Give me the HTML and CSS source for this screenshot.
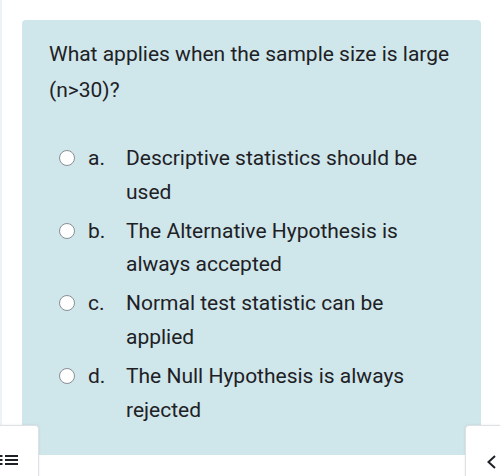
FILE: index.html
```html
<!DOCTYPE html>
<html>
<head>
<meta charset="utf-8">
<link rel="stylesheet" href="styles.css">
</head>
<body>
<div class="page">
  <div class="card">
    <div class="question">What applies when the sample size is large (n&gt;30)?</div>
    <div class="answers">
      <label class="option"><span class="radio"></span><span class="letter">a.</span><span class="text">Descriptive statistics should be used</span></label>
      <label class="option"><span class="radio"></span><span class="letter">b.</span><span class="text">The Alternative Hypothesis is always accepted</span></label>
      <label class="option"><span class="radio"></span><span class="letter">c.</span><span class="text">Normal test statistic can be applied</span></label>
      <label class="option"><span class="radio"></span><span class="letter">d.</span><span class="text">The Null Hypothesis is always rejected</span></label>
    </div>
  </div>
</div>
<div class="drawer-btn left">
  <svg width="19" height="10" viewBox="0 0 19 10"><rect x="0" y="0" width="2.5" height="2" fill="#1d2125"/><rect x="5" y="0" width="13" height="2" fill="#1d2125"/><rect x="0" y="4" width="2.5" height="2" fill="#1d2125"/><rect x="5" y="4" width="13" height="2" fill="#1d2125"/><rect x="0" y="8" width="2.5" height="2" fill="#1d2125"/><rect x="5" y="8" width="13" height="2" fill="#1d2125"/></svg>
</div>
<div class="drawer-btn right">
  <svg width="12" height="14" viewBox="0 0 12 14"><path d="M9 1 L2.5 7 L9 13" fill="none" stroke="#1d2125" stroke-width="2"/></svg>
</div>
</body>
</html>
```
FILE: styles.css
```css
html, body {
  margin: 0;
  padding: 0;
  background: #fff;
  font-family: Roboto, "Liberation Sans", sans-serif;
  color: #1d2125;
}
.page {
  min-height: 476px;
  border-left: 2px solid #eef1f5;
  padding: 20px 0 0 20px;
  box-sizing: border-box;
}
.card {
  width: 459px;
  height: 435px;
  box-sizing: border-box;
  background: #cfe6ea;
  border-radius: 4px;
  padding: 16px 20px 0 27px;
}
.question {
  font-size: 21px;
  line-height: 36px;
}
.answers {
  margin-top: 34px;
  display: flex;
  flex-direction: column;
  gap: 5.7px;
  padding-left: 10px;
}
.option {
  display: flex;
  align-items: flex-start;
  font-size: 21px;
  line-height: 33.5px;
}
.radio {
  flex: none;
  width: 16px;
  height: 16px;
  box-sizing: border-box;
  border: 1px solid #8a8f96;
  border-radius: 50%;
  background: #fff;
  margin-top: 8px;
}
.letter {
  flex: none;
  width: 38px;
  margin-left: 13px;
}
.text {
  width: 310px;
}
.drawer-btn {
  position: absolute;
  top: 425px;
  width: 41px;
  height: 60px;
  background: #fff;
  border: 1px solid #dee2e6;
  border-radius: 4px;
  box-sizing: border-box;
  box-shadow: 0 0 3px rgba(0,0,0,0.08);
}
.drawer-btn.left {
  left: -2px;
  border-left: none;
}
.drawer-btn.left svg {
  position: absolute;
  left: 2px;
  top: 29px;
}
.drawer-btn.right {
  left: 465px;
}
.drawer-btn.right svg {
  position: absolute;
  left: 20px;
  top: 29px;
}
```
